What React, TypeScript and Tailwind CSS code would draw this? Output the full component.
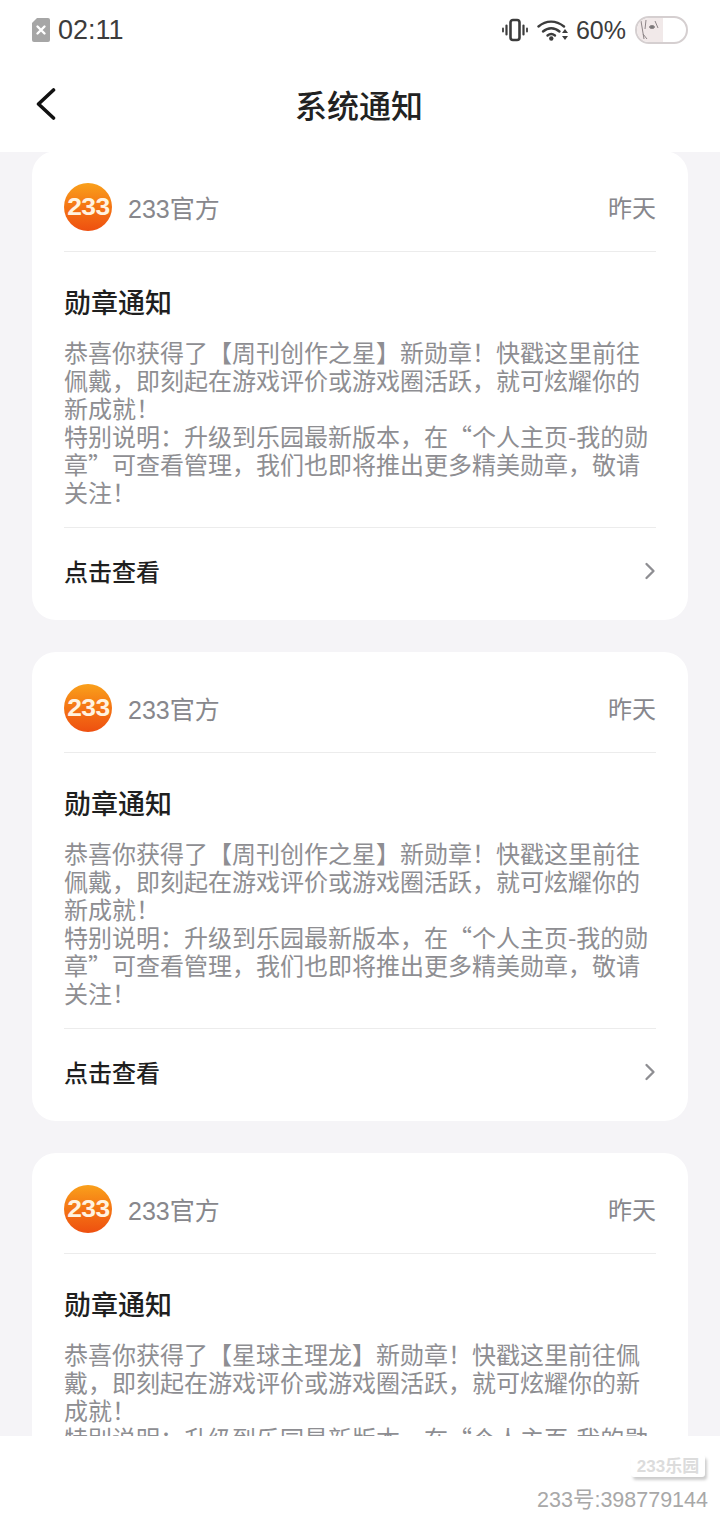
import React from 'react';
import { ChevronRight } from 'lucide-react';

const FONT = 'font-["Liberation_Sans","Noto_Sans_CJK_SC",sans-serif]';

const linesA = [
  '恭喜你获得了【周刊创作之星】新勋章！快戳这里前往',
  '佩戴，即刻起在游戏评价或游戏圈活跃，就可炫耀你的',
  '新成就！',
  '特别说明：升级到乐园最新版本，在“个人主页-我的勋',
  '章”可查看管理，我们也即将推出更多精美勋章，敬请',
  '关注！',
];

// third card runs under the bottom strip, only these lines show
const linesB = [
  '恭喜你获得了【星球主理龙】新勋章！快戳这里前往佩',
  '戴，即刻起在游戏评价或游戏圈活跃，就可炫耀你的新',
  '成就！',
  '特别说明：升级到乐园最新版本，在“个人主页-我的勋',
];

const Logo = () => (
  <div className="w-12 h-12 rounded-full bg-gradient-to-b from-[#f9a01b] via-[#f47414] to-[#ee4f10] flex items-center justify-center shrink-0">
    <span className="text-[#fff3e0] font-bold text-[23px] leading-none tracking-[-0.5px] scale-x-[1.15] font-['Liberation_Sans',sans-serif]">233</span>
  </div>
);

const SimIcon = () => (
  <svg width="18" height="24" viewBox="0 0 18 24">
    <path d="M5 0h11a2 2 0 0 1 2 2v20a2 2 0 0 1-2 2H2a2 2 0 0 1-2-2V5z" fill="#a6a6a6" />
    <path d="M5.500 8.500l7 7M12.500 8.500l-7 7" stroke="#fff" strokeWidth="2.400" strokeLinecap="round" />
  </svg>
);

const VibrateIcon = () => (
  <svg width="26" height="24" viewBox="0 0 26 24" fill="none" stroke="#3c3c3c" strokeLinecap="round">
    <rect x="8.500" y="2" width="9" height="20" rx="2.500" strokeWidth="2.600" />
    <path d="M4.500 7.500v9M21.500 7.500v9" strokeWidth="2.200" />
    <path d="M1 10.500v3M25 10.500v3" strokeWidth="1.800" />
  </svg>
);

const WifiIcon = () => (
  <svg width="32" height="22" viewBox="0 0 32 22" fill="none">
    <path d="M1.500 7.500C9 1 19 1 27 7.500" stroke="#3c3c3c" strokeWidth="2.400" strokeLinecap="round" />
    <path d="M6 12.500c5-4.300 11.500-4.300 16.500 0" stroke="#3c3c3c" strokeWidth="2.400" strokeLinecap="round" />
    <path d="M10.500 16.500c2.500-2 5-2 7.500 0" stroke="#3c3c3c" strokeWidth="2.400" strokeLinecap="round" />
    <circle cx="14.300" cy="19.500" r="2.200" fill="#3c3c3c" />
    <path d="M28 10l3 4h-6zM28 21l-3-4h6z" fill="#3c3c3c" />
  </svg>
);

const Battery = () => (
  <div className="w-[53px] h-7 rounded-full border-2 border-[#d5cfd0] bg-white overflow-hidden">
    <div className="w-[26px] h-full bg-[#f1e9e9] flex items-center justify-center">
      <svg width="22" height="24" viewBox="0 0 22 24" fill="none" stroke="#8d8587" strokeWidth="1">
        <path d="M2 3l3 18M7 2l-1 9M16 3l3 7M4 16l4 5" />
        <ellipse cx="13" cy="9" rx="2.500" ry="1.500" fill="#777" />
      </svg>
    </div>
  </div>
);

const NoticeCard = ({ lines, footer = true }: { lines: string[]; footer?: boolean }) => (
  <div className="bg-white rounded-[24px] px-8 pt-8 pb-[31px] shrink-0">
    <div className="flex items-center h-12">
      <Logo />
      <span className="ml-4 text-[25px] leading-8 text-[#87878c] translate-y-[2px]">233官方</span>
      <span className="ml-auto text-2xl leading-8 text-[#87878c] translate-y-[2px]">昨天</span>
    </div>
    <div className="mt-5 h-px bg-[#ececec]" />
    <h2 className="mt-9 text-[27px] leading-8 font-medium text-[#1f1f1f]">勋章通知</h2>
    <div className="mt-[18px] text-2xl leading-7 text-[#8e8e92] font-['Noto_Sans_CJK_SC',sans-serif]">
      {lines.map((line, i) => (
        <div key={i} className="whitespace-nowrap">{line}</div>
      ))}
    </div>
    {footer && (
      <>
        <div className="mt-[21px] h-px bg-[#ececec]" />
        <div className="flex items-center justify-between mt-[29px] h-8">
          <span className="text-[24px] leading-8 font-medium text-[#1f1f1f]">点击查看</span>
          <ChevronRight size={28} strokeWidth={2} className="text-[#8e8e92] -mr-[8px] -mt-1" />
        </div>
      </>
    )}
  </div>
);

export default function App() {
  return (
    <div className={`relative h-[1520px] w-[720px] overflow-hidden bg-[#f5f4f7] flex flex-col ${FONT}`}>
      {/* status bar + title */}
      <div className="bg-white shrink-0">
        <div className="h-[60px] flex items-center pl-8 pr-8 text-[#3c3c3c]">
          <SimIcon />
          <span className="ml-2 text-[27px] leading-none">02:11</span>
          <div className="ml-auto flex items-center gap-[9px]">
            <VibrateIcon />
            <WifiIcon />
            <span className="text-[25px] leading-none -ml-[2px]">60%</span>
            <Battery />
          </div>
        </div>
        <div className="h-[92px] flex items-center px-[36px]">
          <svg width="20" height="32" viewBox="0 0 20 32" fill="none" stroke="#111" strokeWidth="3.600" strokeLinecap="round" strokeLinejoin="round" className="shrink-0 -mt-1">
            <path d="M17.500 2L2.500 16l15 14" />
          </svg>
          <h1 className="ml-[239px] text-[32px] leading-10 font-medium text-[#222] translate-y-[1px]">系统通知</h1>
        </div>
      </div>

      {/* notice list */}
      <div className="flex flex-col gap-8 px-8 -mt-px">
        <NoticeCard lines={linesA} />
        <NoticeCard lines={linesA} />
        <NoticeCard lines={linesB} footer={false} />
      </div>

      {/* watermark strip over the list */}
      <div className="absolute left-0 right-0 bottom-0 h-[84px] bg-white">
        <div className="absolute right-[15px] top-[19px] w-[74px] h-[22px] rounded-[3px] bg-white shadow-[2px_3px_3px_rgba(0,0,0,0.2)] flex items-center justify-center text-[17px] leading-none font-bold text-[#dcdcdc]">
          233乐园
        </div>
        <div className="absolute right-[12px] top-[52px] text-[21.500px] leading-6 text-[#a8a8a8] whitespace-nowrap">233号:398779144</div>
      </div>
    </div>
  );
}
